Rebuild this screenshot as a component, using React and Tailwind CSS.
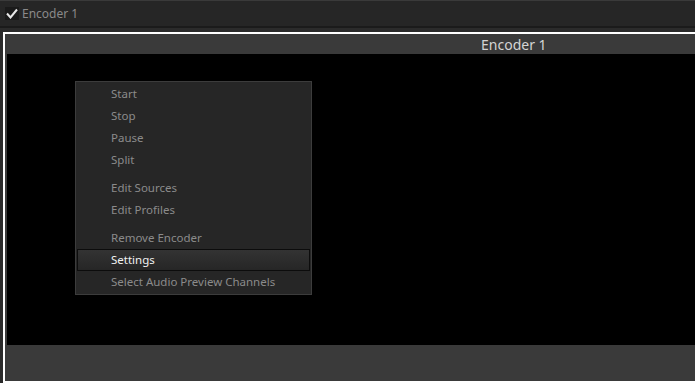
const groups = [
  ["Start", "Stop", "Pause", "Split"],
  ["Edit Sources", "Edit Profiles"],
  ["Remove Encoder", "Settings", "Select Audio Preview Channels"],
];

const font = { fontFamily: '"Noto Sans", "Open Sans", sans-serif' };

const MenuItem = ({ label }) => {
  const active = label === "Settings";
  return (
    <div
      className={
        "h-[22px] flex items-center text-[11.5px] " +
        (active
          ? "mx-[1px] pl-[33px] border border-[#0c0c0c] bg-gradient-to-b from-[#333333] to-[#262626] text-[#f2f2f2]"
          : "pl-[35px] text-[#8b8b8b]")
      }
    >
      {label}
    </div>
  );
};

export default function App() {
  return (
    <div className="w-[695px] h-[383px] bg-[#2b2b2b] overflow-hidden flex flex-col" style={font}>
      <div className="h-[28px] shrink-0 bg-[#262626] border-t border-[#3a3a3a] border-b-2 border-b-[#1b1b1b] flex items-center pl-[5px] gap-[3px]">
        <div className="w-[14px] h-[13px] bg-[#1a1a1a] flex items-center justify-center">
          <svg width="12" height="11" viewBox="0 0 12 11">
            <path d="M1 5.5 L4.5 9.5 L11 1.5" fill="none" stroke="#e6e6e6" strokeWidth="2" />
          </svg>
        </div>
        <span className="text-[12px] text-[#8a8a8a]">Encoder 1</span>
      </div>
      <div className="flex-1 pt-[4px] pl-[3px]">
        <div className="h-full border-l-2 border-t-2 border-b-2 border-white bg-[#3a3a3a] flex flex-col pl-[2px]">
          <div className="h-[20px] shrink-0 flex items-center pl-[474px] text-[14px] text-[#d4d4d4]">Encoder 1</div>
          <div className="h-[291px] shrink-0 bg-black pt-[27px] pl-[68px]">
            <div className="w-[237px] border border-[#3c3c3c] bg-[#262626] py-[1px]">
              {groups.map((g, gi) => (
                <div key={gi} className={gi > 0 ? "mt-[6px]" : ""}>
                  {g.map((l) => (
                    <MenuItem key={l} label={l} />
                  ))}
                </div>
              ))}
            </div>
          </div>
        </div>
      </div>
    </div>
  );
}
